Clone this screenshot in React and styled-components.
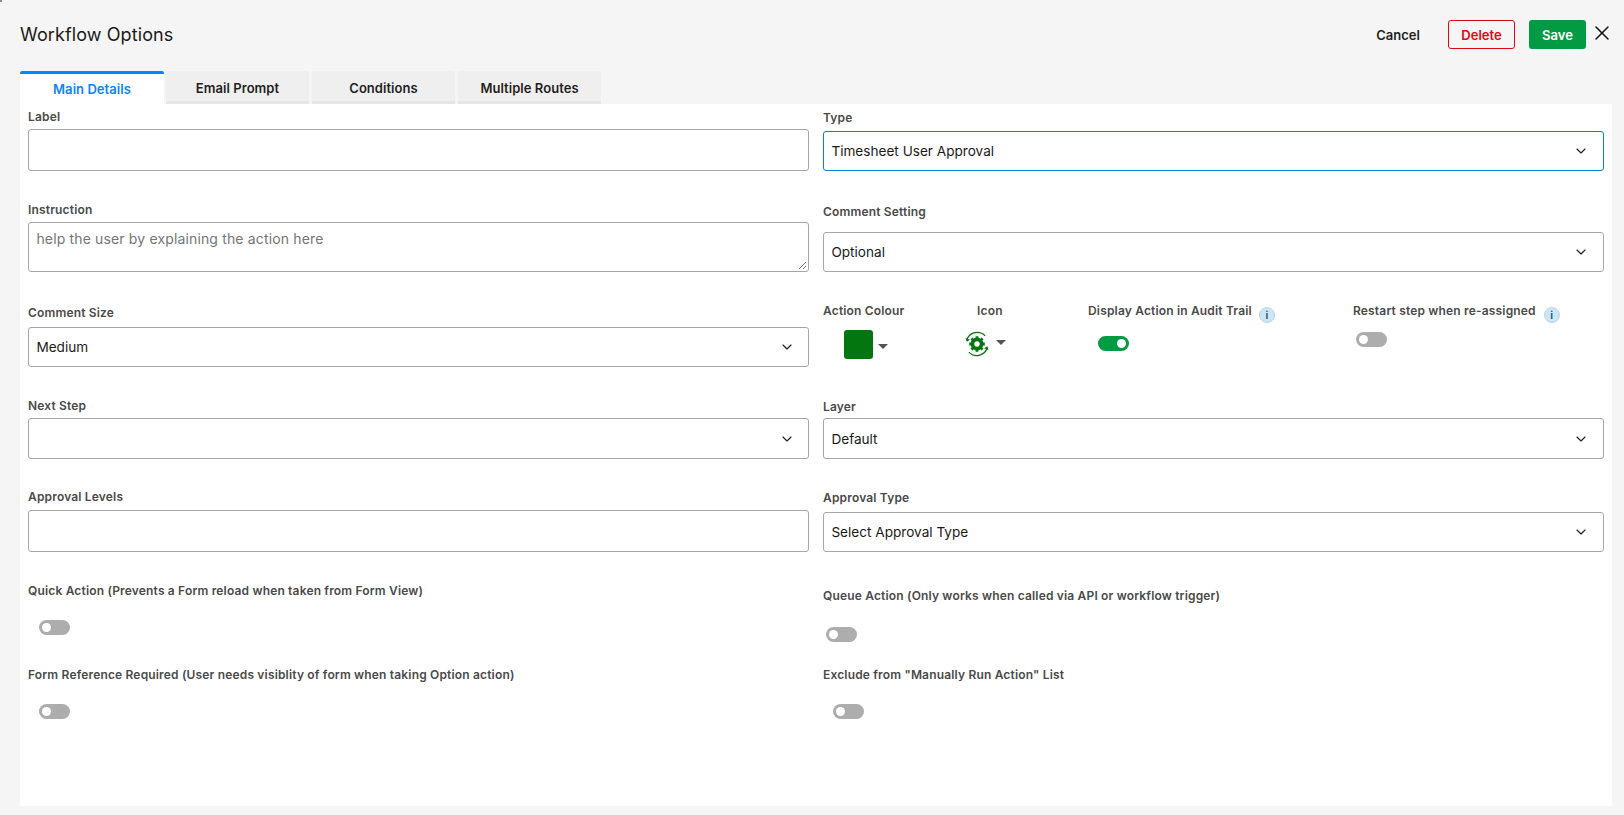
import React from "react";
import styled, { createGlobalStyle } from "styled-components";
import { ChevronDown, X } from "lucide-react";

const Global = createGlobalStyle`
  html, body { margin: 0; padding: 0; background: #f5f5f5; }
  body { font-family: Inter, "Liberation Sans", sans-serif; overflow: hidden; }
  * { box-sizing: border-box; }
`;

const Page = styled.div`
  position: relative;
  width: 1624px;
  height: 815px;
  padding: 0 12px 9px 20px;
  display: flex;
  flex-direction: column;
  background: #f5f5f5;
`;
const CornerMark = styled.span`
  position: absolute;
  left: 0;
  top: 0;
  width: 2px;
  height: 2px;
  background: #6f93aa;
`;
const Header = styled.header`
  height: 71px;
  display: flex;
  align-items: flex-start;
  justify-content: space-between;
`;
const Title = styled.h1`
  margin: 23px 0 0;
  font-size: 18px;
  line-height: 24px;
  font-weight: 400;
  letter-spacing: 0.1px;
  color: #1a1a1a;
`;
const Actions = styled.div`
  display: flex;
  align-items: flex-start;
  padding-top: 20px;
`;
const TextButton = styled.button`
  height: 29px;
  border: 0;
  padding: 0;
  width: 44px;
  margin-right: 28px;
  background: none;
  font: 600 13px Inter, sans-serif;
  color: #1f1f1f;
`;
const OutlineButton = styled.button`
  width: 67px;
  height: 29px;
  padding: 0;
  margin-right: 14px;
  border: 1px solid #e30613;
  border-radius: 3px;
  background: transparent;
  font: 600 13px Inter, sans-serif;
  color: #e30613;
`;
const SaveButton = styled.button`
  width: 57px;
  height: 29px;
  padding: 0;
  margin-right: 9px;
  border: 0;
  border-radius: 3px;
  background: #029a43;
  font: 600 13px Inter, sans-serif;
  color: #fff;
`;
const CloseButton = styled.button`
  width: 14px;
  height: 16px;
  margin: 5px 3px 0 0;
  padding: 0;
  border: 0;
  background: none;
  color: #111;
  display: flex;
  align-items: center;
  justify-content: center;
  svg {
    flex-shrink: 0;
  }
`;
const Tabs = styled.nav`
  display: flex;
  height: 33px;
  gap: 3px;
`;
const Tab = styled.div`
  width: ${(p) => (p.$active ? "144px" : "143px")};
  margin-right: ${(p) => (p.$active ? "-1px" : "0")};
  display: flex;
  align-items: center;
  justify-content: center;
  font-size: 13px;
  font-weight: 600;
  letter-spacing: 0.05px;
  border-radius: 2px 2px 0 0;
  background: ${(p) => (p.$active ? "#fff" : "#efefef")};
  color: ${(p) => (p.$active ? "#0a84ff" : "#1f1f1f")};
  border-top: ${(p) => (p.$active ? "3px solid #0a84ff" : "0")};
  box-shadow: ${(p) => (p.$active ? "none" : "inset 0 -3px 0 #e6e6e6")};
`;
const Panel = styled.main`
  flex: 1;
  background: #fff;
  padding: 0 8px;
  display: grid;
  grid-template-columns: 781px 781px;
  column-gap: 14px;
`;
const Column = styled.div`
  display: flex;
  flex-direction: column;
  min-width: 0;
`;
const Field = styled.div`
  height: ${(p) => p.$h}px;
  padding-top: ${(p) => p.$top || 0}px;
`;
const Label = styled.label`
  display: block;
  font-size: 12px;
  line-height: 18px;
  font-weight: 600;
  letter-spacing: 0.17px;
  color: #4a4a4a;
  white-space: nowrap;
  margin-bottom: ${(p) => (p.$gap ?? 5) - 2}px;
`;
const Box = styled.div`
  height: ${(p) => p.$h}px;
  border: 1px solid ${(p) => (p.$focus ? "#0a84c6" : "#a6a6a6")};
  border-radius: 3px;
  padding: 0 8px 0 7.4px;
  display: flex;
  align-items: center;
  justify-content: space-between;
  font-size: 13.6px;
  color: #1a1a1a;
  background: #fff;
`;
const Chevron = styled(ChevronDown)`
  width: 16px;
  height: 16px;
  margin-left: auto;
  margin-right: ${(p) => p.$inset}px;
  color: #222;
`;
const TextArea = styled.div`
  position: relative;
  height: 50px;
  border: 1px solid #a6a6a6;
  border-radius: 3px;
  padding: 8px 7.4px;
  font-size: 14px;
  letter-spacing: 0.15px;
  line-height: 16px;
  color: #757575;
`;
const Grip = styled.svg`
  position: absolute;
  right: 1px;
  bottom: 1px;
  width: 9px;
  height: 9px;
`;
const OptionRow = styled.div`
  display: grid;
  grid-template-columns: 132px 133px 265px 251px;
  height: 95px;
`;
const OptionCell = styled.div`
  display: flex;
  flex-direction: column;
  align-items: flex-start;
`;
const OptionLabel = styled.div`
  display: flex;
  font-size: 12px;
  line-height: 16px;
  font-weight: 600;
  letter-spacing: 0.17px;
  color: #4a4a4a;
  white-space: nowrap;
  margin-left: ${(p) => p.$x || 0}px;
`;
const Info = styled.span`
  width: 16px;
  height: 16px;
  margin: 4px 0 0 ${(p) => p.$gap || 7}px;
  border-radius: 50%;
  background: #cfe5f3;
  border: 1px solid #b6d6ea;
  color: #1d5c85;
  font: 700 10px/14px Inter, sans-serif;
  text-align: center;
`;
const Swatch = styled.div`
  width: 29px;
  height: 29px;
  border-radius: 3px;
  background: #03760f;
`;
const Caret = styled.span`
  width: 0;
  height: 0;
  border-left: 5px solid transparent;
  border-right: 5px solid transparent;
  border-top: 5px solid #555;
  margin-left: ${(p) => p.$gap}px;
  margin-top: ${(p) => p.$top}px;
`;
const Picker = styled.div`
  display: flex;
  align-items: flex-start;
  margin: ${(p) => p.$m};
`;
const Toggle = styled.div`
  width: 31px;
  height: 15px;
  margin-left: ${(p) => p.$x || 0}px;
  margin-top: ${(p) => p.$y || 0}px;
  border-radius: 8px;
  background: ${(p) => (p.$on ? "#029a43" : "#adadad")};
  padding: 3px;
  display: flex;
  justify-content: ${(p) => (p.$on ? "flex-end" : "flex-start")};
  &::after {
    content: "";
    width: 9px;
    height: 9px;
    border-radius: 50%;
    background: #fff;
  }
`;

const Select = ({ h = 40, focus, inset = 6, children }) => (
  <Box $h={h} $focus={focus}>
    {children ? <span>{children}</span> : null}
    <Chevron $inset={inset} strokeWidth={1.75} />
  </Box>
);

const GearIcon = () => (
  <svg width="26" height="26" viewBox="0 0 24 24" fill="none">
    <path d="M2.6 8.5A10 10 0 0 1 19.5 4.5" stroke="#03760f" strokeWidth="1.2" />
    <path d="M21.4 15.5A10 10 0 0 1 4.5 19.5" stroke="#03760f" strokeWidth="1.2" />
    <path d="M1.5 6.5 2.5 10l3-2zM22.5 17.5 21.5 14l-3 2z" fill="#03760f" />
    <circle cx="12" cy="12" r="4.2" stroke="#03760f" strokeWidth="3.4" />
    <path
      d="M12 4.8v3M12 16.2v3M4.8 12h3M16.2 12h3M6.9 6.9l2.1 2.1M15 15l2.1 2.1M17.1 6.9 15 9M9 15l-2.1 2.1"
      stroke="#03760f"
      strokeWidth="2.6"
    />
  </svg>
);

export default function App() {
  return (
    <Page>
      <Global />
      <CornerMark />
      <Header>
        <Title>Workflow Options</Title>
        <Actions>
          <TextButton>Cancel</TextButton>
          <OutlineButton>Delete</OutlineButton>
          <SaveButton>Save</SaveButton>
          <CloseButton>
            <X size={24} strokeWidth={1.5} />
          </CloseButton>
        </Actions>
      </Header>
      <Tabs>
        <Tab $active>Main Details</Tab>
        <Tab>Email Prompt</Tab>
        <Tab>Conditions</Tab>
        <Tab>Multiple Routes</Tab>
      </Tabs>
      <Panel>
        <Column>
          <Field $h={97} $top={4}>
            <Label $gap={5}>Label</Label>
            <Box $h={42} />
          </Field>
          <Field $h={103}>
            <Label $gap={5}>Instruction</Label>
            <TextArea>
              help the user by explaining the action here
              <Grip viewBox="0 0 9 9">
                <path d="M1 8l7-7M5 8l3-3" stroke="#777" strokeWidth="1" />
              </Grip>
            </TextArea>
          </Field>
          <Field $h={93}>
            <Label $gap={7}>Comment Size</Label>
            <Select inset={5}>Medium</Select>
          </Field>
          <Field $h={91}>
            <Label $gap={5}>Next Step</Label>
            <Select h={41} inset={5} />
          </Field>
          <Field $h={94}>
            <Label $gap={6}>Approval Levels</Label>
            <Box $h={42} />
          </Field>
          <Field $h={84}>
            <Label $gap={22}>Quick Action (Prevents a Form reload when taken from Form View)</Label>
            <Toggle $x={11} />
          </Field>
          <Field $h={80}>
            <Label $gap={22}>Form Reference Required (User needs visiblity of form when taking Option action)</Label>
            <Toggle $x={11} />
          </Field>
        </Column>
        <Column>
          <Field $h={99} $top={5}>
            <Label $gap={6}>Type</Label>
            <Select focus>Timesheet User Approval</Select>
          </Field>
          <Field $h={100}>
            <Label $gap={13}>Comment Setting</Label>
            <Select>Optional</Select>
          </Field>
          <OptionRow>
            <OptionCell>
              <OptionLabel>Action Colour</OptionLabel>
              <Picker $m="11px 0 0 21px">
                <Swatch />
                <Caret $gap={5} $top={14} />
              </Picker>
            </OptionCell>
            <OptionCell>
              <OptionLabel $x={22}>Icon</OptionLabel>
              <Picker $m="12px 0 0 9px">
                <GearIcon />
                <Caret $gap={6} $top={9} />
              </Picker>
            </OptionCell>
            <OptionCell>
              <OptionLabel>
                Display Action in Audit Trail
                <Info>i</Info>
              </OptionLabel>
              <Toggle $on $x={10} $y={13} />
            </OptionCell>
            <OptionCell>
              <OptionLabel>
                Restart step when re-assigned
                <Info $gap={8}>i</Info>
              </OptionLabel>
              <Toggle $x={3} $y={9} />
            </OptionCell>
          </OptionRow>
          <Field $h={91}>
            <Label $gap={4}>Layer</Label>
            <Select h={41}>Default</Select>
          </Field>
          <Field $h={98}>
            <Label $gap={7}>Approval Type</Label>
            <Select>Select Approval Type</Select>
          </Field>
          <Field $h={79}>
            <Label $gap={24}>Queue Action (Only works when called via API or workflow trigger)</Label>
            <Toggle $x={3} />
          </Field>
          <Field $h={80}>
            <Label $gap={22}>Exclude from "Manually Run Action" List</Label>
            <Toggle $x={10} />
          </Field>
        </Column>
      </Panel>
    </Page>
  );
}
